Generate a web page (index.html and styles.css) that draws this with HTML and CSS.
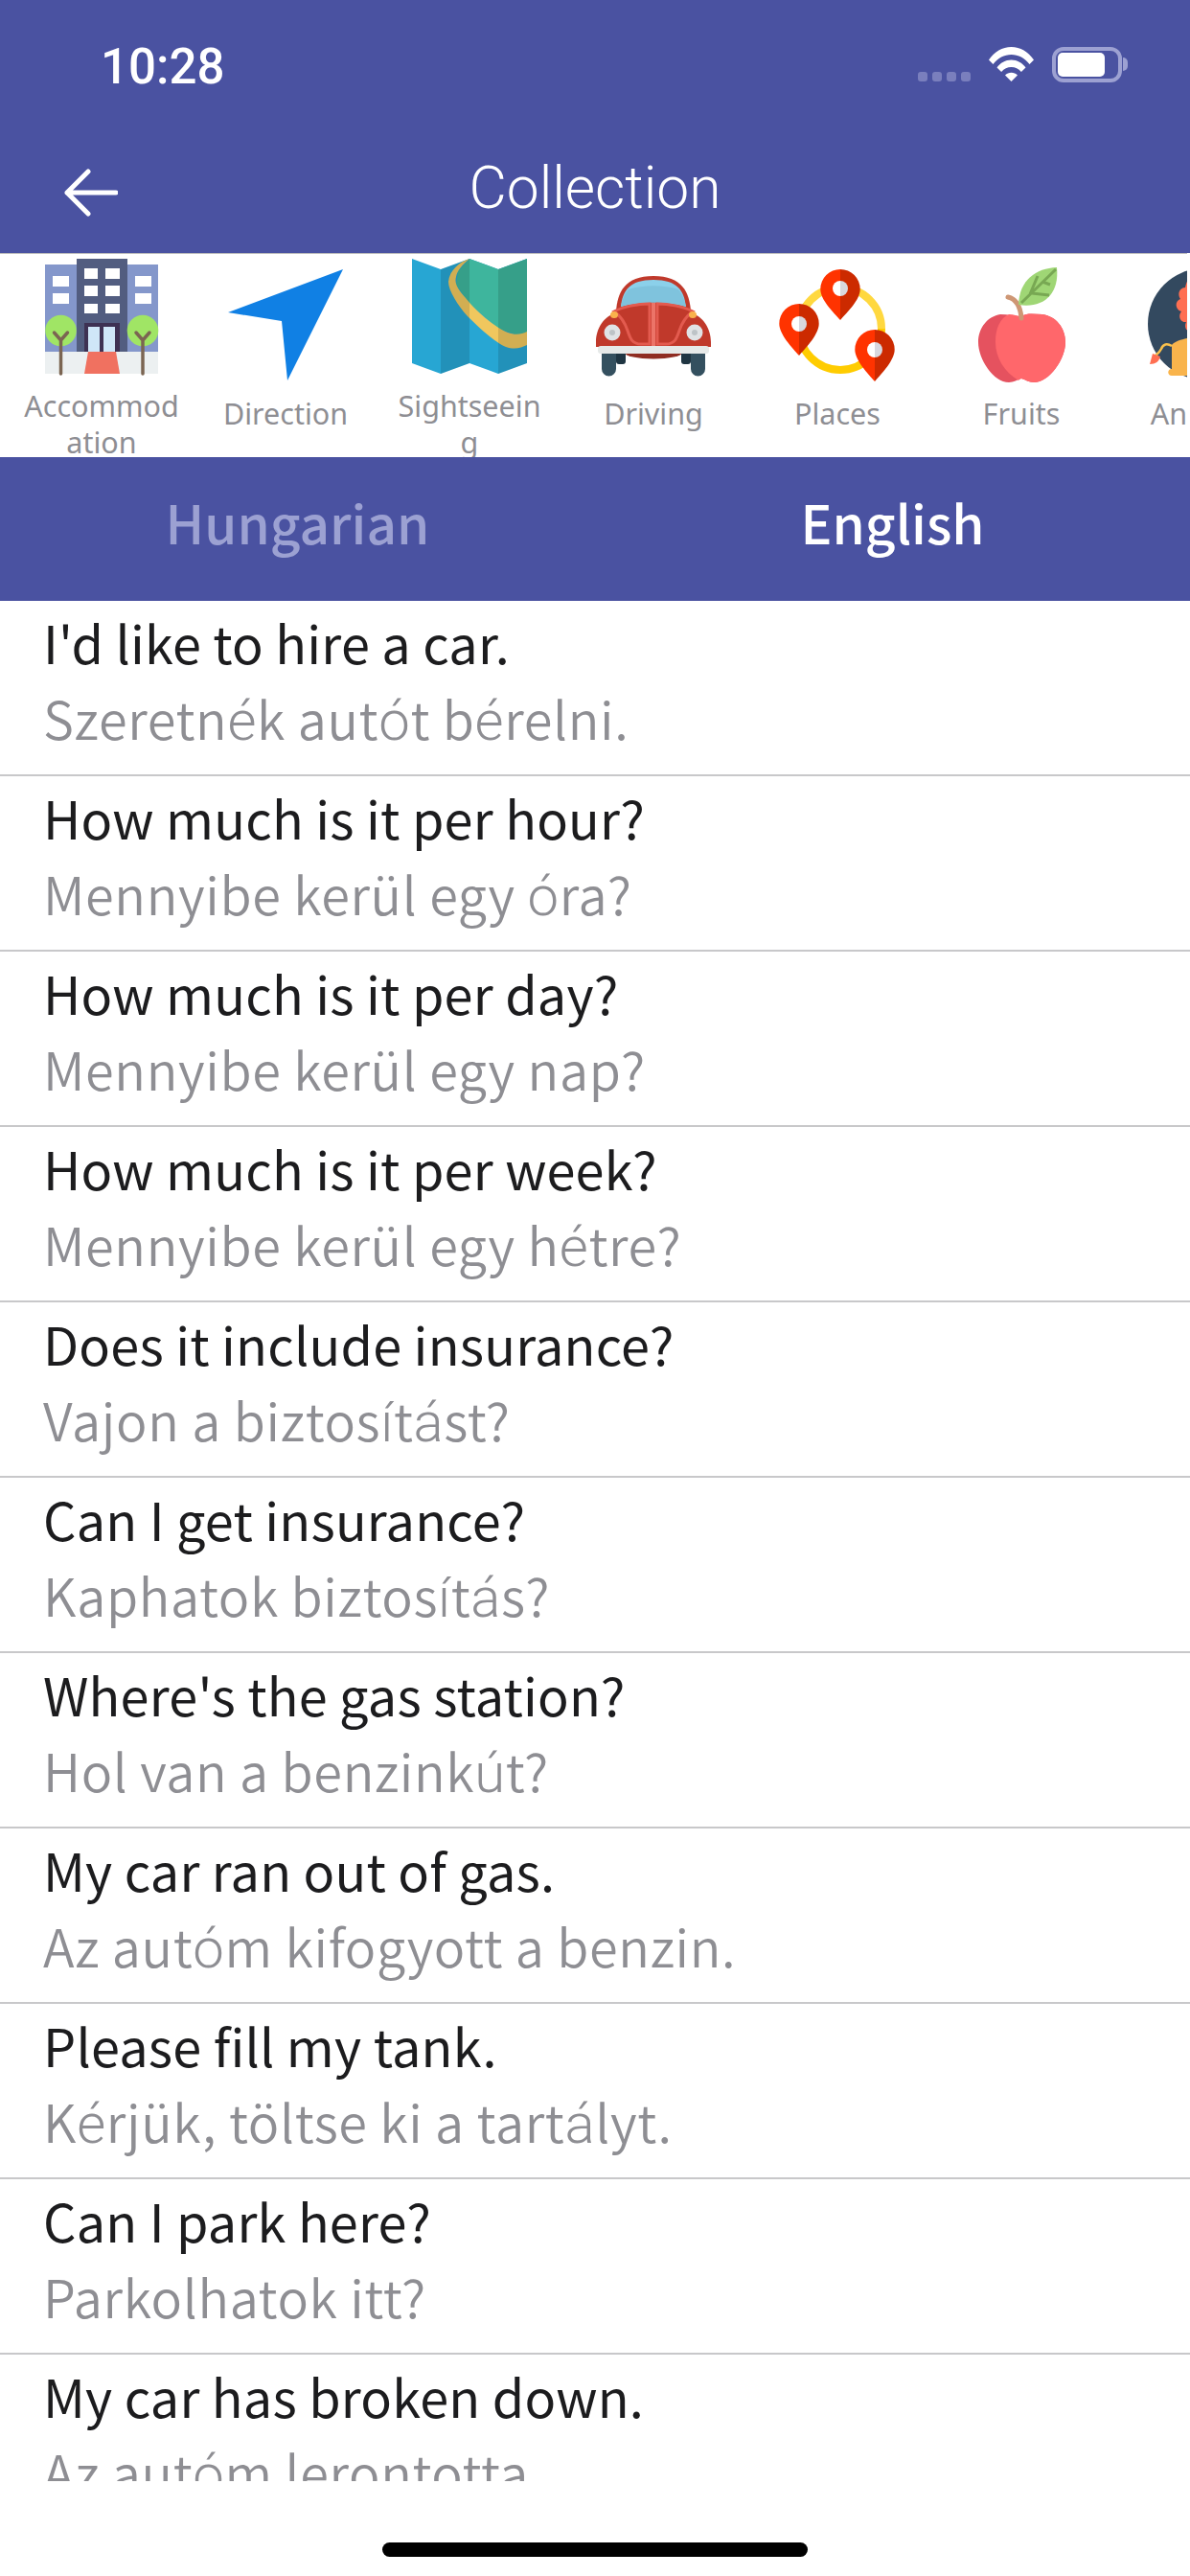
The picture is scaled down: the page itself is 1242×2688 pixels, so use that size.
FILE: index.html
```html
<!DOCTYPE html>
<html lang="en">
<head>
<meta charset="utf-8">
<title>Collection</title>
<link rel="stylesheet" href="styles.css">
</head>
<body>
<div class="app">
  <header class="header">
    <div class="status">
      <span class="time">10:28</span>
      <div class="status-icons">
        <div class="signal"><i></i><i></i><i></i><i></i></div>
        <svg class="wifi" viewBox="0 0 47 36"><path fill="#fff" d="M0 13.5C6 5 14 0 23.5 0S41 5 47 13.5l-4.5 4.6C37.500 11.500 31 8 23.500 8S9.500 11.500 4.500 18.100Z"/><path fill="#fff" d="M8.500 21.500C12 16.500 17.500 13.500 23.500 13.500s11.500 3 15 8l-4.600 4.500C31 22.800 27.500 21 23.500 21s-7.500 1.800-10.400 5Z"/><path fill="#fff" d="M17 29.500c1.800-1.800 4-2.800 6.500-2.800s4.700 1 6.500 2.800L23.500 36Z"/></svg>
        <div class="battery"><div class="battery-fill"></div></div>
        <div class="battery-cap"></div>
      </div>
    </div>
    <nav class="nav">
      <svg class="back" viewBox="0 0 56 50"><path d="M54 25H3M25 3 3 25l22 22" fill="none" stroke="#fff" stroke-width="5" stroke-linecap="round" stroke-linejoin="round"/></svg>
      <h1 class="title">Collection</h1>
    </nav>
  </header>

  <section class="cats">
    <div class="cat">
      <svg class="cat-icon" viewBox="0 0 120 130">
        <rect x="1" y="6" width="118" height="91" fill="#8497cb"/>
        <rect x="34" y="0" width="53" height="97" fill="#525d80"/>
        <rect x="1" y="97" width="118" height="23" fill="#ecf0f1"/>
        <g fill="#fff">
          <rect x="42" y="10" width="14" height="11"/><rect x="64" y="10" width="15" height="11"/>
          <rect x="42" y="28" width="14" height="11"/><rect x="64" y="28" width="15" height="11"/>
          <rect x="42" y="47" width="14" height="10"/><rect x="64" y="47" width="15" height="10"/>
          <rect x="9" y="18" width="17" height="11"/><rect x="9" y="36" width="17" height="11"/>
          <rect x="95" y="18" width="17" height="11"/><rect x="95" y="36" width="17" height="11"/>
        </g>
        <rect x="42" y="67" width="37" height="30" fill="#3e3153"/>
        <rect x="46" y="71" width="12" height="26" fill="#cfe6f8"/>
        <rect x="62" y="71" width="12" height="26" fill="#cfe6f8"/>
        <path d="M46 97h29l4 23H42Z" fill="#f07160"/>
        <circle cx="17.500" cy="75" r="16.300" fill="#a0e565"/>
        <circle cx="103" cy="75" r="16.300" fill="#a0e565"/>
        <path d="M17.500 120V85M10.500 77l7 8 7-8M103 120V85M96 77l7 8 7-8" fill="none" stroke="#7b6552" stroke-width="3.500" stroke-linecap="round" stroke-linejoin="round"/>
      </svg>
      <span class="cat-label">Accommodation</span>
    </div>
    <div class="cat">
      <svg class="cat-icon" viewBox="0 0 120 130"><path d="M120 11 0 56l56 9 6 62Z" fill="#1080e4"/></svg>
      <span class="cat-label single">Direction</span>
    </div>
    <div class="cat">
      <svg class="cat-icon" viewBox="0 0 120 130">
        <path d="M0 0l30 11L60 0l30 11L120 0v109l-30 11-30-11-30 11-30-11Z" fill="#27a6d3"/>
        <path d="M48 13 60 0l30 11L120 0v78L108 79 90 73 60 47 46 27Z" fill="#3eb59d"/>
        <path d="M60 0C50 3 39 12 38 24c0 9 10 25 20 36 11 11 28 27 40 32 9 3 16 1 22-2V76c-6 3-12 4-20 1-13-5-34-23-44-36-8-9-12-15-10-22 1-7 7-13 14-19Z" fill="#f0c75e"/>
        <path d="M30 11 60 0v109l-30 11ZM90 11 120 0v109l-30 11Z" fill="#000" opacity=".12"/>
      </svg>
      <span class="cat-label">Sightseeing</span>
    </div>
    <div class="cat">
      <svg class="cat-icon" viewBox="0 0 120 130">
        <ellipse cx="60" cy="98" rx="30" ry="6.500" fill="#8f2d22"/>
        <rect x="21" y="95" width="10" height="15" rx="3" fill="#1f3542"/>
        <rect x="89" y="95" width="10" height="15" rx="3" fill="#1f3542"/>
        <path d="M6 95h15v20a7.500 7.500 0 0 1-15 0ZM99 95h15v20a7.500 7.500 0 0 1-15 0Z" fill="#34505f"/>
        <path d="M21 56C22 35 30 18 60 18s38 17 39 38Z" fill="#c0392b"/>
        <path d="M26 50C28 33 35 22 60 22s32 11 34 28C72 44 48 44 26 50Z" fill="#8bd0ea"/>
        <path d="M26 50c2-10 5-14 8-18 15-5 37-5 52 0 3 4 6 8 8 18C72 44 48 44 26 50Z" fill="#7fc3dd"/>
        <path d="M0 87C0 72 9 60 20 57 28 50 44 46 60 46s32 4 40 11c11 3 20 15 20 30v5H0Z" fill="#c0392b"/>
        <path d="M19 55C28 50 44 47 56 47v42H47C38 89 36 84 33 75 30 66 26 60 19 55ZM101 55C92 50 76 47 64 47v42h9C82 89 84 84 87 75 90 66 94 60 101 55Z" fill="none" stroke="#e35b4f" stroke-width="3"/>
        <rect x="58" y="46" width="4" height="46" fill="#ec7468"/>
        <circle cx="17" cy="77" r="8.500" fill="#e0e3e6"/><circle cx="17" cy="77" r="3" fill="#bdc3c7"/>
        <circle cx="103" cy="77" r="8.500" fill="#e0e3e6"/><circle cx="103" cy="77" r="3" fill="#bdc3c7"/>
        <ellipse cx="19" cy="58.500" rx="4" ry="3.500" fill="#f9b24c"/><ellipse cx="101" cy="58.500" rx="4" ry="3.500" fill="#f9b24c"/>
        <rect x="2" y="91" width="116" height="8" rx="3" fill="#e6e9e8"/>
      </svg>
      <span class="cat-label single">Driving</span>
    </div>
    <div class="cat">
      <svg class="cat-icon overflow" viewBox="0 0 120 130">
        <path d="M20 73a43 43 0 0 1 86 0" fill="none" stroke="#ffd83f" stroke-width="8"/>
        <path d="M106 73a43 43 0 0 1-86 0" fill="none" stroke="#ffcc00" stroke-width="8"/>
        <g>
          <path d="M63 11a20.700 20.700 0 0 0-20.700 20.700C42.300 43 56 56 63 64Z" fill="#ff3300"/>
          <path d="M63 11a20.700 20.700 0 0 1 20.700 20.700C83.700 43 70 56 63 64Z" fill="#cc2a00"/>
          <path d="M63 23a8 8 0 0 0 0 16Z" fill="#fff"/><path d="M63 23a8 8 0 0 1 0 16Z" fill="#d8d8df"/>
          <path d="M20 47A20.700 20.700 0 0 0-.7 67.700C-.7 79 13 93 20 101Z" fill="#ff3300"/>
          <path d="M20 47a20.700 20.700 0 0 1 20.700 20.700C40.700 79 27 93 20 101Z" fill="#cc2a00"/>
          <path d="M20 60a8 8 0 0 0 0 16Z" fill="#fff"/><path d="M20 60a8 8 0 0 1 0 16Z" fill="#d8d8df"/>
          <path d="M99 74a20.700 20.700 0 0 0-20.700 20.700C78.300 106 92 120 99 128Z" fill="#ff3300"/>
          <path d="M99 74a20.700 20.700 0 0 1 20.700 20.700C119.700 106 106 120 99 128Z" fill="#cc2a00"/>
          <path d="M99 87a8 8 0 0 0 0 16Z" fill="#fff"/><path d="M99 87a8 8 0 0 1 0 16Z" fill="#d8d8df"/>
        </g>
      </svg>
      <span class="cat-label single">Places</span>
    </div>
    <div class="cat">
      <svg class="cat-icon" viewBox="0 0 120 130">
        <path d="M60 60C67 56 74 58 82 58c14 2 24 14 24 29 0 18-17 42-33 42-5 0-9-3-13-4-4 1-8 4-13 4-16 0-32-24-32-42 0-15 10-27 23-29 8 0 15 2 22 2Z" fill="#e5525f"/>
        <path d="M60 60C67 56 74 58 82 58c14 2 24 14 24 29 0 18-17 42-33 42-5 0-9-3-13-4-1 0-2 1-3 2C42 118 33 103 33 87c0-15 5-25 14-29 5 0 9 2 13 2Z" fill="#ff676b"/>
        <path d="M60 62C59 50 55 42 46 40" fill="none" stroke="#ce9775" stroke-width="5" stroke-linecap="round"/>
        <path d="M97 9C75 10 58 22 57 48 82 52 100 38 97 9Z" fill="#9fd675"/>
        <path d="M60 46 96 11M69 37 77 18M71 36 89 38M82 24 90 27" fill="none" stroke="#78a853" stroke-width="3"/>
      </svg>
      <span class="cat-label single">Fruits</span>
    </div>
    <div class="cat">
      <svg class="cat-icon" viewBox="0 0 120 130">
        <circle cx="58" cy="68" r="58" fill="#33495f"/>
        <path d="M44 20c6 0 10 3 14 6v50H44c-5-1-6-6-4-10-6 1-9-6-5-11-7-2-7-11-1-13-4-6 0-12 5-12 1-5 3-10 5-10Z" fill="#ff6f52"/>
        <path d="M25 112V90c4-5 12-6 20-8h30v40H25c-5 0-5-7 0-7Z" fill="#f9b44c"/>
        <path d="M25 91c-5-3-9-2-11 3-2 4-4 5-6 7" fill="none" stroke="#f9c04c" stroke-width="2.500"/>
        <path d="M2 110l3-11 8 3c-1 5-5 8-11 8Z" fill="#ff6f52"/>
      </svg>
      <span class="cat-label single">Animals</span>
    </div>
  </section>

  <div class="tabs">
    <div class="tab muted">Hungarian</div>
    <div class="tab">English</div>
  </div>

  <main class="list">
    <div class="row"><p class="en">I'd like to hire a car.</p><p class="hu">Szeretn<span class="acc">é</span>k aut<span class="acc">ó</span>t b<span class="acc">é</span>relni.</p></div>
    <div class="row"><p class="en">How much is it per hour?</p><p class="hu">Mennyibe kerül egy <span class="acc">ó</span>ra?</p></div>
    <div class="row"><p class="en">How much is it per day?</p><p class="hu">Mennyibe kerül egy nap?</p></div>
    <div class="row"><p class="en">How much is it per week?</p><p class="hu">Mennyibe kerül egy h<span class="acc">é</span>tre?</p></div>
    <div class="row"><p class="en">Does it include insurance?</p><p class="hu">Vajon a biztos<span class="acc">í</span>t<span class="acc">á</span>st?</p></div>
    <div class="row"><p class="en">Can I get insurance?</p><p class="hu">Kaphatok biztos<span class="acc">í</span>t<span class="acc">á</span>s?</p></div>
    <div class="row"><p class="en">Where's the gas station?</p><p class="hu">Hol van a benzink<span class="acc">ú</span>t?</p></div>
    <div class="row"><p class="en">My car ran out of gas.</p><p class="hu">Az aut<span class="acc">ó</span>m kifogyott a benzin.</p></div>
    <div class="row"><p class="en">Please fill my tank.</p><p class="hu">K<span class="acc">é</span>rjük, töltse ki a tart<span class="acc">á</span>lyt.</p></div>
    <div class="row"><p class="en">Can I park here?</p><p class="hu">Parkolhatok itt?</p></div>
    <div class="row"><p class="en">My car has broken down.</p><p class="hu">Az aut<span class="acc">ó</span>m lerontotta.</p></div>
  </main>

  <footer class="home"><div class="home-bar"></div></footer>
</div>
</body>
</html>
```
FILE: styles.css
```css
* { box-sizing: border-box; margin: 0; padding: 0; }
html, body { width: 1242px; height: 2688px; background: #fff; overflow: hidden; }
.app { width: 1242px; height: 2688px; display: flex; flex-direction: column; }

.header { height: 264px; background: #4a52a1; color: #fff; display: flex; flex-direction: column; }
.status { height: 110px; padding: 47px 0 0 105px; display: flex; justify-content: space-between; align-items: flex-start; }
.time { font: 500 51px/46px Roboto, sans-serif; }
.status-icons { display: flex; align-items: flex-start; padding: 2px 65px 0 0; }
.signal { display: flex; gap: 5px; margin: 26px 19px 0 0; }
.signal i { width: 10px; height: 10px; border-radius: 3px; background: #7a7fbd; }
.wifi { width: 47px; height: 36px; margin-right: 19px; }
.battery { width: 73px; height: 37px; border: 4px solid #9da1d2; border-radius: 12px; padding: 2px 14px 2px 2px; }
.battery-fill { height: 100%; background: #fff; border-radius: 5px; }
.battery-cap { width: 5px; height: 14px; margin: 11px 0 0 1px; background: #9da1d2; border-radius: 0 7px 7px 0; }

.nav { position: relative; height: 154px; display: flex; justify-content: center; padding-top: 52px; }
.back { position: absolute; left: 67px; top: 66px; width: 56px; height: 50px; }
.title { font: 300 60.5px/70px Roboto, sans-serif; }

.cats { height: 213px; width: 1239px; border-top: 1px solid #bdbdbd; padding: 5px 0 0 10px; display: flex; overflow: hidden; background: #fff; }
.cat { flex: 0 0 192px; display: flex; flex-direction: column; align-items: center; }
.cat-icon { width: 120px; height: 130px; flex: none; overflow: visible; }
.cat-label { width: 162px; padding-top: 4px; text-align: center; overflow-wrap: anywhere; font: 400 30.5px/38px "Noto Sans", sans-serif; color: #8e8e93; }
.cat-label.single { padding-top: 12px; }

.tabs { height: 150px; background: #4a52a1; display: flex; flex: none; }
.tab { flex: 1; text-align: center; font: 500 55px/134px "Noto Sans CJK KR", sans-serif; color: #fff; }
.tab.muted { color: #9ca1d2; }

.list { height: 1962px; overflow: hidden; flex: none; }
.row { height: 183px; border-bottom: 2px solid #c8c8ca; padding: 0 0 0 45px; }
.en { font: 400 54px/79px "Noto Sans CJK KR", sans-serif; letter-spacing: .2px; color: #1c1c1e; padding-top: 3px; }
.hu { font: 350 54px/79px "Noto Sans CJK KR", sans-serif; letter-spacing: .65px; color: #8e8e93; }
.acc { font-family: Roboto, sans-serif; font-weight: 300; font-size: 58px; line-height: 1; }

.home { flex: 1; display: flex; justify-content: center; padding-top: 64px; }
.home-bar { width: 444px; height: 15px; border-radius: 8px; background: #000; }
```
